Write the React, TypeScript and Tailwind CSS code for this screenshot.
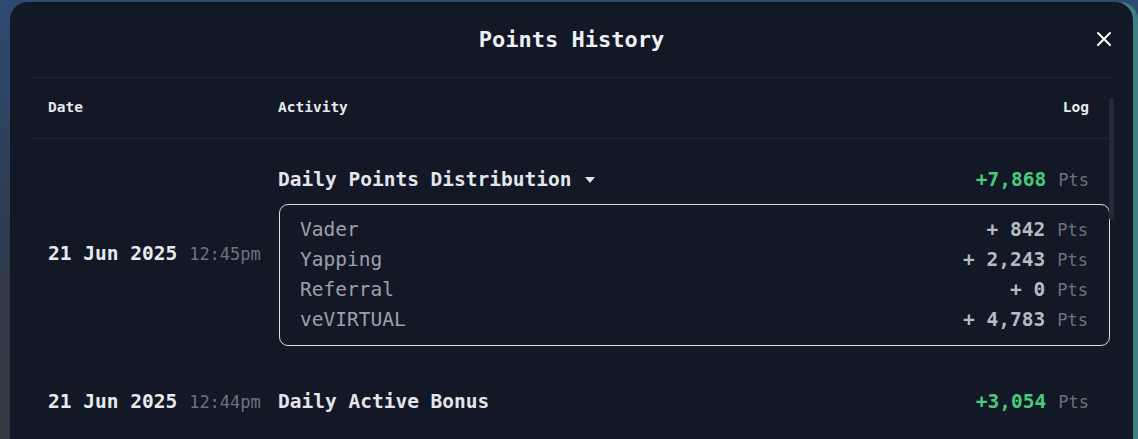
import { X } from 'lucide-react'

interface Breakdown {
  label: string
  amount: string
}

const breakdown: Breakdown[] = [
  { label: 'Vader', amount: '842' },
  { label: 'Yapping', amount: '2,243' },
  { label: 'Referral', amount: '0' },
  { label: 'veVIRTUAL', amount: '4,783' },
]

const mono = 'font-["DejaVu_Sans_Mono","Liberation_Mono",monospace]'

function DateCell({ date, time, className = '' }: { date: string; time: string; className?: string }) {
  return (
    <div className={`flex w-[249px] shrink-0 items-baseline pl-[19px] ${className}`}>
      <span className="text-[19.5px] font-bold text-[#e8eaee]">{date}</span>
      <span className="ml-[12px] text-[17px] text-[#6b7280]">{time}</span>
    </div>
  )
}

function Points({ value }: { value: string }) {
  return (
    <div className="flex items-baseline">
      <span className="text-[19.5px] font-bold text-[#48cc7c]">{value}</span>
      <span className="ml-[12px] text-[17px] text-[#6b7280]">Pts</span>
    </div>
  )
}

export default function App() {
  return (
    <div
      className={`h-[439px] w-[1138px] overflow-hidden bg-[linear-gradient(180deg,#2d4a70_0%,#2f3a4c_60%,#33373f_100%)] pl-[10px] pt-[2px] ${mono}`}
    >
      <div className="relative h-[520px] w-[1123px] rounded-[18px] bg-[#121826] shadow-[5px_0_0_0_#3f7f84]">
        <div className="mx-[19px] flex h-[76px] items-center justify-center border-b border-[#1f2636]">
          <h2 className="text-[22px] font-bold text-[#eef0f3]">Points History</h2>
        </div>
        <button className="absolute right-[17px] top-[25px] text-white">
          <X size={24} strokeWidth={2} />
        </button>

        <div className="relative mx-[19px]">
          <div className="absolute right-0 top-[20px] h-[122px] w-[5px] rounded-full bg-[#222a37]" />

          <div className="mr-[4px] flex h-[61px] items-center border-b border-[#1f2636] text-[14.5px] font-bold text-[#e8eaee]">
            <div className="w-[249px] shrink-0 pl-[19px]">Date</div>
            <div className="flex-1">Activity</div>
            <div className="pr-[21px]">Log</div>
          </div>

          <div className="mr-[4px] flex items-center pb-[17px] pt-[26px]">
            <DateCell date="21 Jun 2025" time="12:45pm" className="mb-[4px]" />
            <div className="flex-1">
              <div className="flex h-[30px] items-center justify-between pr-[21px]">
                <div className="flex items-center">
                  <span className="text-[19.5px] font-bold text-[#e3e6ea]">Daily Points Distribution</span>
                  <svg width="10" height="6" viewBox="0 0 10 6" className="ml-[13px]">
                    <path d="M0 0h10L5 6z" fill="#e3e6ea" />
                  </svg>
                </div>
                <Points value="+7,868" />
              </div>
              <div className="ml-px mt-[9px] rounded-[9px] border border-[#d9dce1] py-[10px] pl-[20px] pr-[21px]">
                {breakdown.map((item) => (
                  <div key={item.label} className="flex h-[30px] items-center justify-between">
                    <span className="text-[19.5px] text-[#9ba1ab]">{item.label}</span>
                    <div className="flex items-baseline">
                      <span className="text-[19.5px] font-bold text-[#b6bbc3]">+ {item.amount}</span>
                      <span className="ml-[12px] text-[17px] text-[#6b7280]">Pts</span>
                    </div>
                  </div>
                ))}
              </div>
            </div>
          </div>

          <div className="mr-[4px] flex items-center pb-[19px] pt-[24px]">
            <DateCell date="21 Jun 2025" time="12:44pm" />
            <div className="flex h-[30px] flex-1 items-center justify-between pr-[21px]">
              <span className="text-[19.5px] font-bold text-[#e3e6ea]">Daily Active Bonus</span>
              <Points value="+3,054" />
            </div>
          </div>
        </div>
      </div>
    </div>
  )
}
